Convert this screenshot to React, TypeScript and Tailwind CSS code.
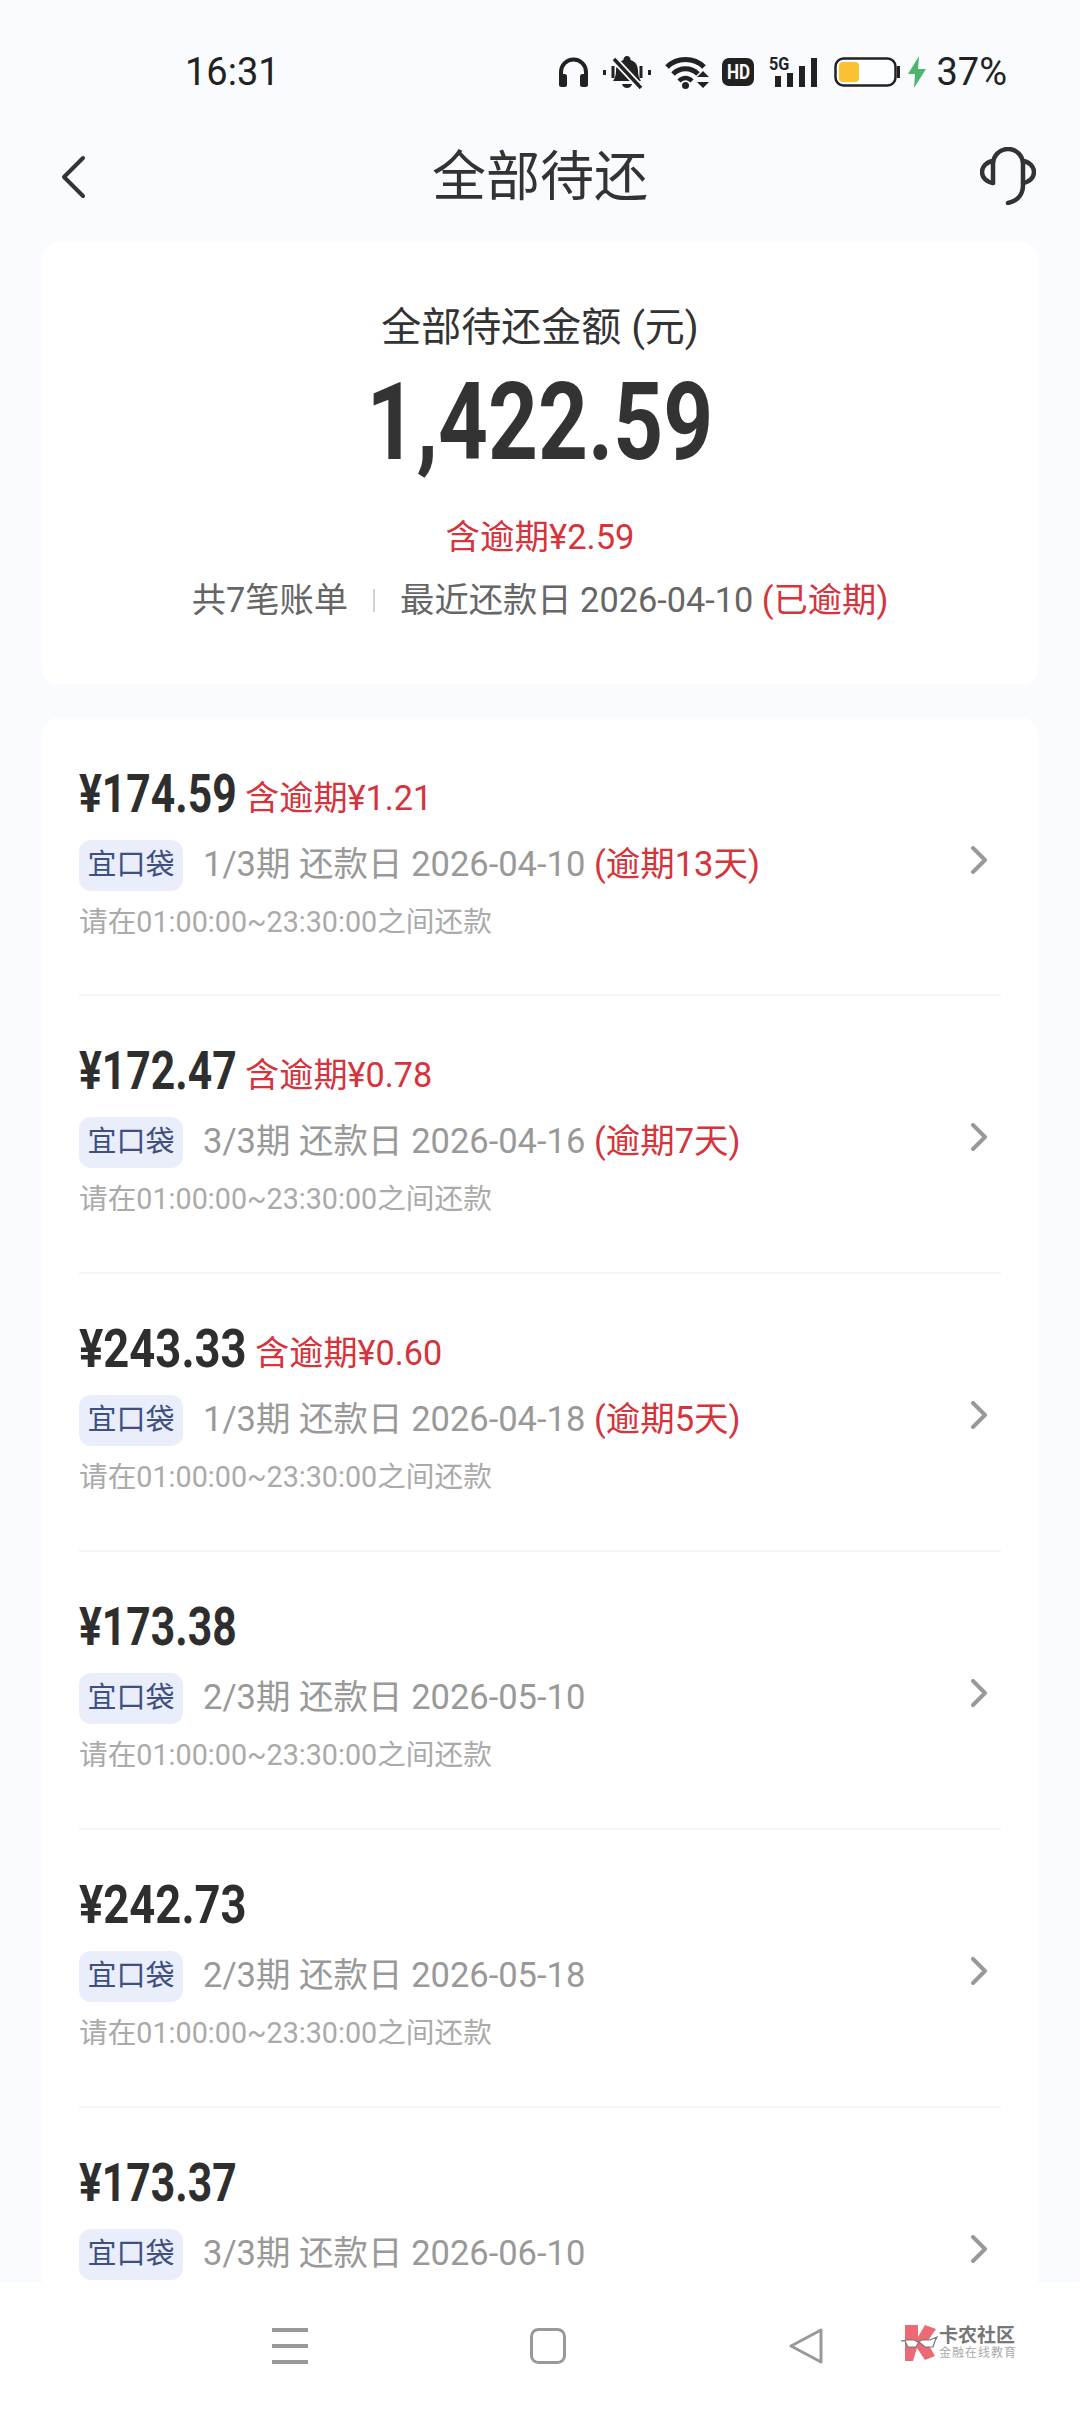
import React from 'react';

interface Bill {
  amount: string;
  overdueAmount?: string;
  period: string;
  dueDate: string;
  overdueDays?: string;
}

const bills: Bill[] = [
  { amount: '174.59', overdueAmount: '1.21', period: '1/3期', dueDate: '2026-04-10', overdueDays: '(逾期13天)' },
  { amount: '172.47', overdueAmount: '0.78', period: '3/3期', dueDate: '2026-04-16', overdueDays: '(逾期7天)' },
  { amount: '243.33', overdueAmount: '0.60', period: '1/3期', dueDate: '2026-04-18', overdueDays: '(逾期5天)' },
  { amount: '173.38', period: '2/3期', dueDate: '2026-05-10' },
  { amount: '242.73', period: '2/3期', dueDate: '2026-05-18' },
  { amount: '173.37', period: '3/3期', dueDate: '2026-06-10' },
];

function StatusIcons() {
  return (
    <div className="flex items-center">
      {/* headphones */}
      <svg width="31" height="30" viewBox="0 0 31 30" fill="none">
        <path d="M3 20V15a12.5 12.5 0 0 1 25 0v5" stroke="#222" strokeWidth="4" />
        <rect x="1" y="17" width="8" height="13" rx="2.5" fill="#222" />
        <rect x="22" y="17" width="8" height="13" rx="2.5" fill="#222" />
      </svg>
      {/* muted bell */}
      <svg className="ml-[14px]" width="48" height="33" viewBox="0 0 48 33" fill="none">
        <path d="M24 0a3.5 3.5 0 0 1 3.5 4C33 5.500 35 10 35 15c0 4 1 7 3 10H10c2-3 3-6 3-10 0-5 2-9.500 7.500-11A3.500 3.500 0 0 1 24 0z" fill="#222" />
        <path d="M19 28h10c-1 3-3 4-5 4s-4-1-5-4z" fill="#222" />
        <path d="M11 3l27 29" stroke="#fafbfe" strokeWidth="7" />
        <path d="M11 3l27 29" stroke="#222" strokeWidth="3.500" />
        <path d="M1.500 14v5M10 10v12M38 10v12M46.500 14v5" stroke="#222" strokeWidth="3" />
      </svg>
      {/* wifi with up/down arrows */}
      <svg className="ml-[14px]" width="44" height="33" viewBox="0 0 44 33" fill="none">
        <path d="M2 11C12 1 29 1 39 11" stroke="#222" strokeWidth="5" />
        <path d="M8 18c7-7 18-7 25 0" stroke="#222" strokeWidth="5" />
        <path d="M14 25c4-4 9-4 13 0" stroke="#222" strokeWidth="4.500" />
        <circle cx="20.500" cy="29.500" r="3.500" fill="#222" />
        <path d="M38 15l-6 6h12zM38 32l-6-6h12z" fill="#222" />
      </svg>
      {/* HD badge */}
      <div className="ml-[13px] flex h-[28px] w-[32px] items-center justify-center rounded-[7px] bg-[#222] text-[20px] leading-none font-bold text-white">
        <span className="scale-x-[0.85]">HD</span>
      </div>
      {/* 5G signal */}
      <div className="relative ml-[17px] h-[32px] w-[46px]">
        <span className="absolute top-[-1px] left-[-2px] origin-left scale-x-[0.9] text-[18px] leading-none font-bold text-[#222]">
          5G
        </span>
        <svg className="absolute top-0 left-0" width="46" height="32" viewBox="0 0 46 32">
          <rect x="4" y="20" width="6" height="11" fill="#222" />
          <rect x="16" y="17" width="6" height="14" fill="#222" />
          <rect x="28" y="10" width="6" height="21" fill="#222" />
          <rect x="40" y="2" width="6" height="29" fill="#222" />
        </svg>
      </div>
      {/* battery */}
      <svg className="ml-[17px]" width="66" height="30" viewBox="0 0 66 30" fill="none">
        <rect x="1.500" y="1.500" width="60" height="27" rx="8" fill="#fdfeff" stroke="#222" strokeWidth="2.500" />
        <rect x="5" y="5" width="20" height="20" rx="4" fill="#fcc033" />
        <rect x="63" y="9" width="3" height="12" fill="#222" />
      </svg>
      {/* charging bolt */}
      <svg className="ml-[7px]" width="20" height="32" viewBox="0 0 20 32">
        <path d="M12 0L1 18h7L7 32l12-19h-8z" fill="#4cb56d" />
      </svg>
      <span className="ml-[9px] text-[38px] leading-none text-[#222]">37%</span>
    </div>
  );
}

function BillRow({ bill, first, last }: { bill: Bill; first: boolean; last: boolean }) {
  // amounts without a "1" are wider in the reference's font
  const wide = !bill.amount.includes('1');
  return (
    <div className={`mx-[37px] h-[278px] shrink-0 ${first ? 'pt-[50px]' : 'pt-[49px]'} ${last ? '' : 'border-b-2 border-[#f4f5f7]'}`}>
      <div className="flex h-[52px] items-center">
        <span className={`text-[54px] leading-none font-bold text-[#2e2e2e] ${wide ? 'w-[165px]' : 'w-[155px]'}`}>
          <span className={`inline-block origin-left ${wide ? 'scale-x-[0.84]' : 'scale-x-[0.79]'}`}>¥{bill.amount}</span>
        </span>
        {bill.overdueAmount && (
          <span className="mt-[9px] ml-[11px] text-[34.200px] leading-none text-[#d6333b]">含逾期¥{bill.overdueAmount}</span>
        )}
      </div>
      <div className="mt-[20px] flex h-[51px] items-center">
        <span className="flex h-[51px] w-[104px] items-center justify-center rounded-[12px] bg-[#e9eefa] text-[29px] leading-none text-[#3f4f80]">
          宜口袋
        </span>
        <span className="mb-[3px] ml-[20px] text-[34.500px] leading-none whitespace-pre text-[#999999]">
          {bill.period} 还款日 {bill.dueDate}
          {bill.overdueDays && <span className="text-[#d6333b]"> {bill.overdueDays}</span>}
        </span>
        <svg className="mr-[14px] mb-[11px] ml-auto" width="16" height="28" viewBox="0 0 16 28" fill="none">
          <path d="M2 2l12 12L2 26" stroke="#999" strokeWidth="4" strokeLinecap="round" strokeLinejoin="round" />
        </svg>
      </div>
      {/* the last row's note sits below the navigation bar, so it never shows */}
      {!last && <div className="mt-[15px] text-[28.700px] leading-[32px] text-[#aaaaaa]">请在01:00:00~23:30:00之间还款</div>}
    </div>
  );
}

export default function App() {
  return (
    <div className="flex h-[2412px] w-[1080px] flex-col overflow-hidden bg-[#f9fbfe] font-['Roboto','Noto_Sans_CJK_SC',sans-serif]">
      {/* Status bar */}
      <div className="flex h-[144px] shrink-0 items-center justify-between pr-[73px] pl-[185px]">
        <span className="text-[38px] leading-none text-[#222]">16:31</span>
        <StatusIcons />
      </div>

      {/* Title bar */}
      <div className="relative flex h-[98px] shrink-0 items-center justify-center pb-[30px]">
        <svg className="absolute top-[11px] left-[60px]" width="26" height="44" viewBox="0 0 26 44" fill="none">
          <path d="M23 3L4 22l19 19" stroke="#333" strokeWidth="4" strokeLinecap="round" strokeLinejoin="round" />
        </svg>
        <span className="text-[54px] leading-none text-[#333]">全部待还</span>
        <svg className="absolute top-[3px] left-[980px]" width="56" height="58" viewBox="0 0 56 58" fill="none">
          <path d="M13 36V17a15 15 0 0 1 30 0v21c0 9-5 16-15 18" stroke="#333" strokeWidth="4.500" strokeLinecap="round" />
          <path d="M13 14C6 15 2 20 2 25s4 10 11 11M43 14c7 1 11 6 11 11s-4 10-11 11" stroke="#333" strokeWidth="4.500" strokeLinecap="round" />
        </svg>
      </div>

      {/* Summary card */}
      <div className="mx-[42px] flex h-[442px] shrink-0 flex-col items-center rounded-[16px] bg-white pt-[62px]">
        <div className="text-[40px] leading-[48px] text-[#333]">全部待还金额 (元)</div>
        <div className="mt-[10px] scale-x-[0.807] text-[108px] leading-[120px] font-bold text-[#333]">1,422.59</div>
        <div className="mt-[35px] text-[34.500px] leading-[40px] text-[#d6333b]">含逾期¥2.59</div>
        <div className="mt-[23px] flex items-center text-[34.300px] leading-[40px] text-[#666]">
          <span>共7笔账单</span>
          <span className="mx-[25px] h-[23px] w-[2px] bg-[#d4d4d4]" />
          <span className="whitespace-pre">
            最近还款日 2026-04-10 <span className="text-[#d6333b]">(已逾期)</span>
          </span>
        </div>
      </div>

      {/* Bill list */}
      <div className="mx-[42px] mt-[34px] flex min-h-0 flex-1 flex-col overflow-hidden rounded-t-[16px] bg-white">
        {bills.map((bill, i) => (
          <BillRow key={bill.amount} bill={bill} first={i === 0} last={i === bills.length - 1} />
        ))}
      </div>

      {/* Navigation bar */}
      <div className="relative flex h-[129px] shrink-0 items-start bg-white pt-[45px] pl-[272px]">
        <svg width="36" height="36" viewBox="0 0 36 36">
          <rect y="0" width="36" height="4" fill="#999" />
          <rect y="16" width="36" height="4" fill="#999" />
          <rect y="32" width="36" height="4" fill="#999" />
        </svg>
        <svg className="ml-[222px]" width="36" height="36" viewBox="0 0 36 36" fill="none">
          <rect x="1.500" y="1.500" width="33" height="33" rx="7" stroke="#999" strokeWidth="3" />
        </svg>
        <svg className="ml-[222px]" width="36" height="36" viewBox="0 0 36 36" fill="none">
          <path d="M33 2v32L3 18z" stroke="#999" strokeWidth="3" strokeLinejoin="round" />
        </svg>

        {/* Watermark logo */}
        <div className="absolute top-[41px] left-[900px] flex items-start">
          <svg width="38" height="37" viewBox="0 0 38 37">
            <path d="M5 1h13v12L25 1l11 4-9 13 8 14-10 4-8-12-4 13H5z" fill="#ec6a76" />
            <path d="M1 17l6-1h7l4 2 4-2h8l7-3-2 4-2 6h-8l-6-5-3 5H8l-3-6z" fill="#fff" stroke="#777" strokeWidth="1.200" />
          </svg>
          <div className="ml-[1px] flex flex-col items-start pt-[2px]">
            <span className="text-[19px] leading-[20px] font-bold text-[#777]">卡农社区</span>
            <span className="mt-[1px] text-[12px] leading-[13px] tracking-[1px] text-[#aaa]">金融在线教育</span>
          </div>
        </div>
      </div>
    </div>
  );
}
